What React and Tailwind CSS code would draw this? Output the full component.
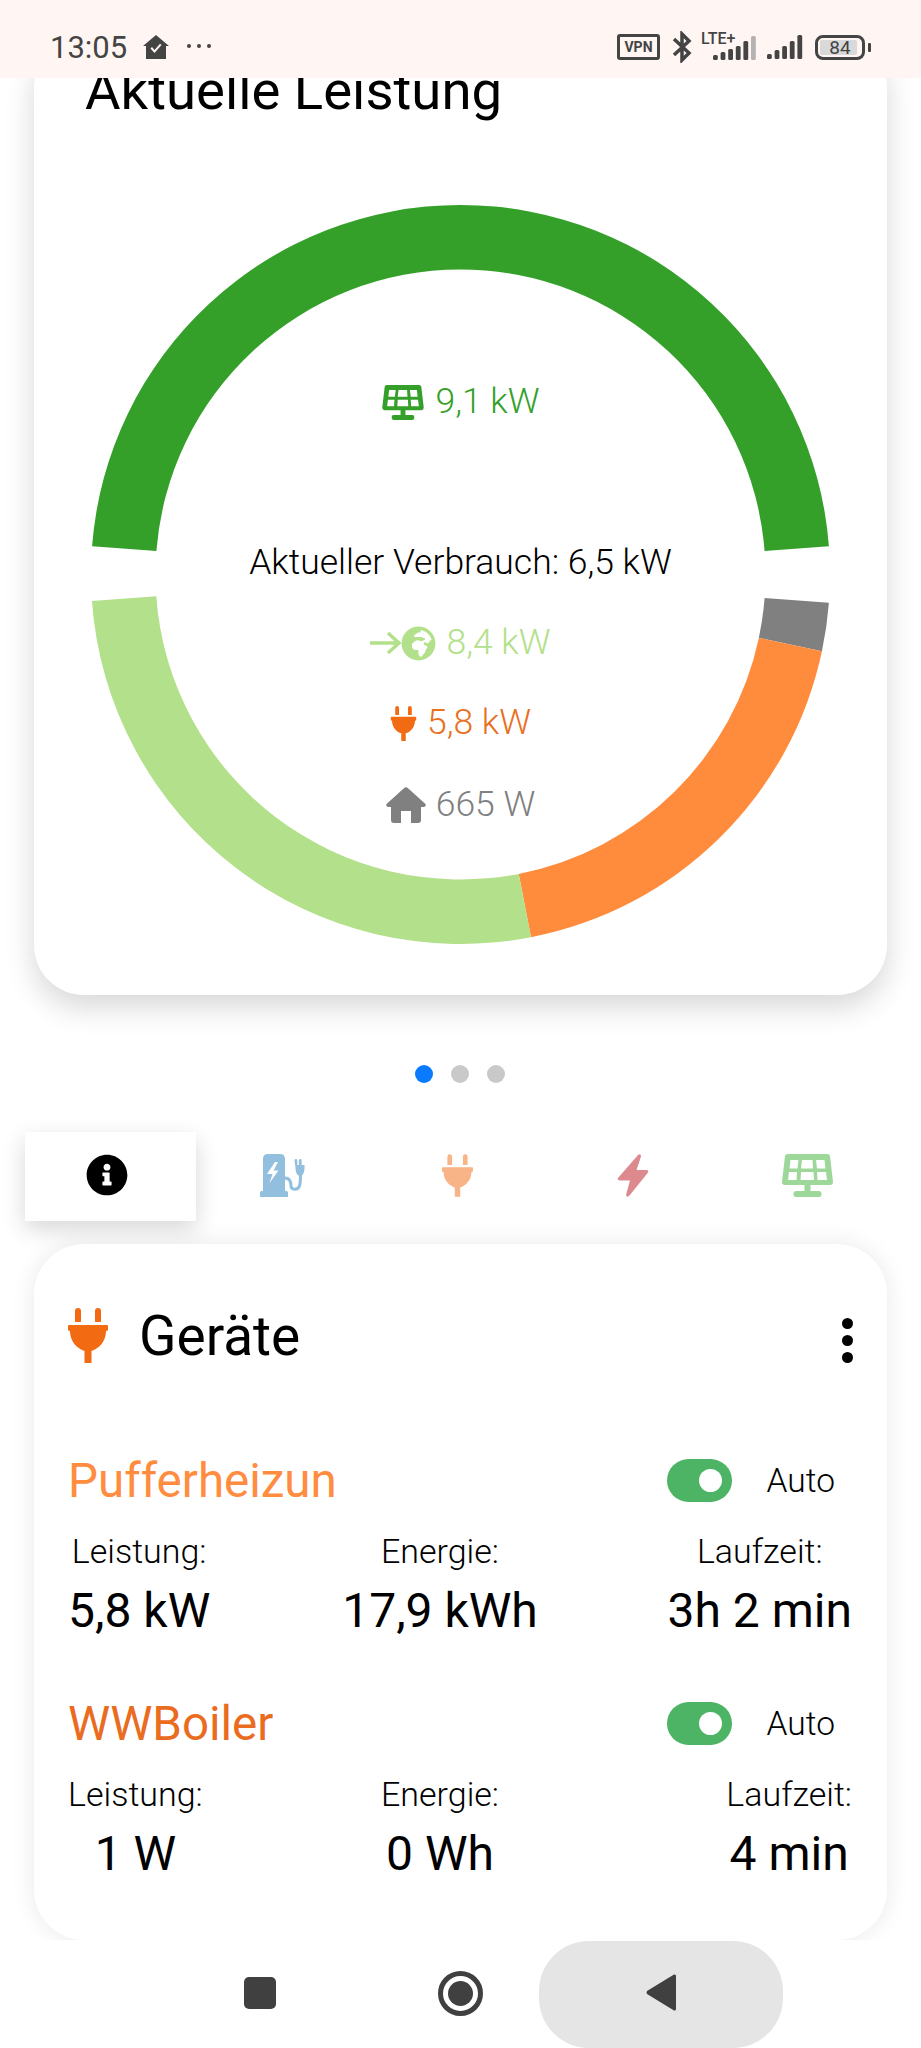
import React from "react";
import { FaGlobeAfrica, FaInfoCircle } from "react-icons/fa";

const roboto = "font-['Roboto',sans-serif]";

// ring geometry, angles in degrees clockwise from 3 o'clock
const CX = 426.5;
const CY = 457.5;
const R = 369.5;
const r = 305;
const pt = (rad, deg) => {
  const a = (deg * Math.PI) / 180;
  return `${(CX + rad * Math.cos(a)).toFixed(2)} ${(CY + rad * Math.sin(a)).toFixed(2)}`;
};
const arc = (from, to) => {
  const large = to - from > 180 ? 1 : 0;
  return `M${pt(R, from)} A${R} ${R} 0 ${large} 1 ${pt(R, to)} L${pt(r, to)} A${r} ${r} 0 ${large} 0 ${pt(r, from)} Z`;
};

const SolarIcon = ({ className }) => (
  <svg viewBox="0 0 51 43" className={className} fill="currentColor">
    <path
      fillRule="evenodd"
      d="M5.5 0H45.5Q47.5 0 48 2L51 28Q51 31 48 31H28.5V37H37Q39.5 37 39.5 40T37 43H14Q11.500 43 11.500 40T14 37H22.500V31H3Q0 31 0 28L3 2Q3.500 0 5.500 0ZM8.500 6L7.500 14.500H15.500L16.500 6ZM20 6L19 14.500H31L30.500 6ZM34 6L35 14.500H43.500L42.500 6ZM7 18L6 26H14.500L15 18ZM19 18L18.500 26H32L31.500 18ZM35 18L35.500 26H45L44 18Z"
    />
  </svg>
);

const PlugIcon = ({ className }) => (
  <svg viewBox="0 0 40 55" className={className} fill="currentColor">
    <path d="M7 3a3 3 0 0 1 6 0V14H7ZM27 3a3 3 0 0 1 6 0V14H27Z" />
    <path d="M1 17H39Q40 17 40 18V22Q40 23 38 23C38 34 30 41 23.500 43V55H16.500V43C10 41 2 34 2 23Q0 23 0 22V18Q0 17 1 17Z" />
  </svg>
);

const BoltIcon = ({ className }) => (
  <svg viewBox="0 0 32 43" className={className} fill="currentColor">
    <path d="M21 1L1 24Q0 26.500 3 26.500H13L9 41Q10 44 12.500 41.500L31 18.500Q32 16 29 16H19.500L24 2.500Q24 -1 21 1Z" />
  </svg>
);

const HomeIcon = ({ className }) => (
  <svg viewBox="0 0 40 36" className={className} fill="currentColor">
    <path d="M18.500 .8Q20 -.3 21.500 .8L39.500 17Q40.500 19.500 38 20H35V33Q35 36 32 36H25V24H15V36H8Q5 36 5 33V20H2Q-.5 19.500 .5 17Z" />
  </svg>
);

const ChargerIcon = ({ className }) => (
  <svg viewBox="0 0 46 43" className={className}>
    <path
      fill="currentColor"
      fillRule="evenodd"
      d="M8 0H20Q25 0 25 5V37H26.500Q28 37 28 39V43H0V39Q0 37 1.500 37H3V5Q3 0 8 0ZM15 8L7 20H12.500L9.500 29L18.500 16.500H13.500L18 8Z"
    />
    <path d="M25 24C31 24 31 30 31 32C31 36 38 36.500 39.500 32C40.500 29 40.500 25 40.500 20" fill="none" stroke="currentColor" strokeWidth="3" />
    <path fill="currentColor" d="M35 6.500a1.300 1.300 0 0 1 2.800 0V11H39.300V6.500a1.300 1.300 0 0 1 2.800 0V11H45V14Q45 21 40.500 22Q36 21 36 14Z" transform="translate(-.500 0)" />
  </svg>
);

const Signal = ({ className, bars, viewBox, dim }) => (
  <svg viewBox={viewBox} className={className} fill="#444">
    {bars.map((h, i) => (
      <rect key={i} x={i * 7.6} y={24 - h} width="4.800" height={h} rx="1.500" fill={dim === i ? "#b5b2b1" : "#444"} />
    ))}
  </svg>
);

const StatusBar = () => (
  <div className={`${roboto} relative z-10 h-[78px] bg-[#fff5f3] flex items-center pt-[16px] pl-[50px] pr-[50px] text-[#444]`}>
    <span className="text-[31px] leading-none">13:05</span>
    <svg viewBox="0 0 26 24" className="w-[26px] h-[24px] ml-[16px]" fill="#444">
      <path fillRule="evenodd" d="M13 0L26 11H23V24H3V11H0ZM7.500 13.500L11.500 18L18.500 10L17 8.700L11.500 15L9 12Z" />
    </svg>
    <div className="flex gap-[6px] ml-[18px] -mt-[3px]">
      <span className="w-[4px] h-[4px] rounded-full bg-[#444]"></span>
      <span className="w-[4px] h-[4px] rounded-full bg-[#444]"></span>
      <span className="w-[4px] h-[4px] rounded-full bg-[#444]"></span>
    </div>
    <div className="ml-auto flex items-center">
      <span className="w-[43px] h-[26px] border-[3px] border-[#444] rounded-[3px] flex items-center justify-center text-[14px] font-bold leading-none">VPN</span>
      <svg viewBox="0 0 20 32" className="w-[20px] h-[32px] ml-[12px]" fill="none" stroke="#444" strokeWidth="3.500">
        <path d="M2 8L17 22L10 29V3L17 10L2 24" />
      </svg>
      <div className="relative w-[56px] h-[26px] ml-[9px]">
        <span className="absolute left-0 -top-[3px] text-[16px] leading-none font-medium">LTE+</span>
        <Signal className="absolute right-0 bottom-0 w-[44px] h-[24px]" viewBox="0 0 44 24" bars={[5, 8, 11, 14, 19, 24]} dim={5} />
      </div>
      <Signal className="w-[36px] h-[24px] ml-[10px]" viewBox="0 0 36 24" bars={[5, 9, 13, 18, 24]} />
      <div className="relative w-[50px] h-[25px] ml-[12px] border-[3px] border-[#444] rounded-[8px] overflow-hidden flex items-center justify-center">
        <span className="absolute left-[2px] top-[2px] bottom-[2px] w-[37px] bg-[#d9d9d9] rounded-[2px]"></span>
        <span className="relative text-[19px] leading-none">84</span>
      </div>
      <span className="w-[3px] h-[9px] ml-[3px] bg-[#444] rounded-[1px]"></span>
    </div>
  </div>
);

const ChartRow = ({ color, className = "", children }) => (
  <div className={`h-[80px] flex items-center justify-center gap-[10px] text-[35.5px] font-light ${color} ${className}`}>{children}</div>
);

const PowerCard = () => (
  <section className="-mt-[40px] bg-white rounded-[50px] shadow-[0_12px_30px_rgba(0,0,0,0.16)]">
    <h2 className="pt-[25px] pl-[51px] text-[54.5px] leading-[54px] h-[79px] text-black whitespace-nowrap">Aktuelle Leistung</h2>
    <div className="relative">
      <svg viewBox="0 0 853 878" className="block w-[853px] h-[878px]">
        <path d={arc(184.4, 355.6)} fill="#34a02a" />
        <path d={arc(4.4, 12)} fill="#808080" />
        <path d={arc(12, 79)} fill="#ff8c3c" />
        <path d={arc(79, 175.900)} fill="#b3e08a" />
      </svg>
      <div className="absolute inset-0 pt-[245px] flex flex-col">
        <ChartRow color="text-[#34a02a]">
          <SolarIcon className="w-[44px] h-[35px]" />
          <span>9,1 kW</span>
        </ChartRow>
        <div className="h-[81px]"></div>
        <ChartRow color="text-black">
          <span>Aktueller Verbrauch: 6,5 kW</span>
        </ChartRow>
        <ChartRow color="text-[#b3e08a]">
          <span className="flex items-center">
            <svg viewBox="0 0 31 24" className="w-[31px] h-[24px]" fill="none" stroke="currentColor" strokeWidth="3.500">
              <path d="M0 12H29M18 2L29 12L18 22" />
            </svg>
            <FaGlobeAfrica className="w-[35px] h-[35px]" />
          </span>
          <span>8,4 kW</span>
        </ChartRow>
        <ChartRow color="text-[#e8701f]">
          <PlugIcon className="w-[27px] h-[35px] text-[#f26a12]" />
          <span>5,8 kW</span>
        </ChartRow>
        <ChartRow color="text-[#808080]" className="mt-[2px]">
          <HomeIcon className="w-[40px] h-[36px]" />
          <span>665 W</span>
        </ChartRow>
      </div>
    </div>
  </section>
);

const Dots = () => (
  <div className="mt-[70px] h-[18px] flex justify-center gap-[18px] pr-[2px]">
    <span className="w-[18px] h-[18px] rounded-full bg-[#0a7aff]"></span>
    <span className="w-[18px] h-[18px] rounded-full bg-[#c9c9c9]"></span>
    <span className="w-[18px] h-[18px] rounded-full bg-[#c9c9c9]"></span>
  </div>
);

const Tabs = () => (
  <div className="mt-[49px] -mx-[9px] h-[89px] grid grid-cols-5 gap-[4px]">
    <div className="flex items-center justify-center bg-white pb-[4px] pr-[8px] shadow-[0_8px_22px_rgba(0,0,0,0.16)]">
      <FaInfoCircle className="w-[42px] h-[42px] text-black" />
    </div>
    <div className="flex items-center justify-center pb-[2px] pr-[6px]">
      <ChargerIcon className="w-[46px] h-[43px] text-[#92bfde]" />
    </div>
    <div className="flex items-center justify-center pb-[2px] pr-[6px]">
      <PlugIcon className="w-[31px] h-[43px] text-[#f8b486]" />
    </div>
    <div className="flex items-center justify-center pb-[2px] pr-[6px]">
      <BoltIcon className="w-[32px] h-[43px] text-[#dd8a8f]" />
    </div>
    <div className="flex items-center justify-center pb-[2px] pr-[6px]">
      <SolarIcon className="w-[51px] h-[43px] text-[#9ed79a]" />
    </div>
  </div>
);

const Stat = ({ label, value, className }) => (
  <div className={`flex flex-col items-center ${className}`}>
    <span className="h-[50px] flex items-center text-[34px] font-light whitespace-nowrap">{label}</span>
    <span className="mt-[5px] h-[60px] flex items-center text-[48px] whitespace-nowrap">{value}</span>
  </div>
);

const Device = ({ name, color, power, energy, time, className }) => (
  <div className={className}>
    <div className="h-[60px] flex items-center">
      <span className={`text-[47.5px] font-[450] leading-none pt-[3px] ${color}`}>{name}</span>
      <div className="ml-auto mr-[17px] flex items-center gap-[35px]">
        <span className="relative w-[65px] h-[43px] rounded-full bg-[#4cb464]">
          <span className="absolute right-[10px] top-[10px] w-[23px] h-[23px] rounded-full bg-white"></span>
        </span>
        <span className="text-[33.5px] font-light text-black pt-[2px]">Auto</span>
      </div>
    </div>
    <div className="grid grid-cols-[272px_200px_1fr] mt-[16px] text-black">
      <Stat label="Leistung:" value={power} className="justify-self-start" />
      <Stat label="Energie:" value={energy} className="justify-self-center" />
      <Stat label="Laufzeit:" value={time} className="justify-self-end" />
    </div>
  </div>
);

const DevicesCard = () => (
  <section className="mt-[23px] h-[696px] shrink-0 bg-white rounded-[50px] pl-[34px] pr-[35px] pt-[57px] shadow-[0_0_24px_rgba(0,0,0,0.09)]">
    <div className="h-[70px] flex items-center">
      <PlugIcon className="w-[40px] h-[55px] text-[#f26a12] -mt-[2px]" />
      <span className="ml-[31px] text-[55px] leading-none text-black">Geräte</span>
      <div className="ml-auto mr-[-1px] flex flex-col gap-[6px] mt-[8px]">
        <span className="w-[11px] h-[11px] rounded-full bg-black"></span>
        <span className="w-[11px] h-[11px] rounded-full bg-black"></span>
        <span className="w-[11px] h-[11px] rounded-full bg-black"></span>
      </div>
    </div>
    <Device className="mt-[79px]" name="Pufferheizun" color="text-[#ff8c3f]" power="5,8 kW" energy="17,9 kWh" time="3h 2 min" />
    <Device className="mt-[52px]" name="WWBoiler" color="text-[#e96c1f]" power="1 W" energy="0 Wh" time="4 min" />
  </section>
);

const NavBar = () => (
  <div className="relative z-10 h-[108px] shrink-0 bg-white flex items-center">
    <span className="ml-[244px] w-[32px] h-[32px] rounded-[5px] bg-[#404040] mt-[-2px]"></span>
    <span className="ml-[162px] w-[45px] h-[45px] rounded-full border-[5px] border-[#404040] flex items-center justify-center mt-[-2px]">
      <span className="w-[25px] h-[25px] rounded-full bg-[#404040]"></span>
    </span>
    <div className="ml-[56px] w-[244px] h-[107px] mt-[1px] rounded-[50px] bg-[#e5e5e5] flex items-center pl-[107px]">
      <svg viewBox="0 0 30 37" className="w-[30px] h-[37px] mt-[-4px]" fill="#404040">
        <path d="M28 .5Q30 0 30 2V35Q30 37 28 36.500L1 20Q0 18.500 1 17Z" />
      </svg>
    </div>
  </div>
);

export default function App() {
  return (
    <div className={`${roboto} w-[921px] h-[2048px] overflow-hidden bg-white flex flex-col`}>
      <StatusBar />
      <main className="h-[1862px] shrink-0 px-[34px] flex flex-col overflow-hidden">
        <PowerCard />
        <Dots />
        <Tabs />
        <DevicesCard />
      </main>
      <NavBar />
    </div>
  );
}
